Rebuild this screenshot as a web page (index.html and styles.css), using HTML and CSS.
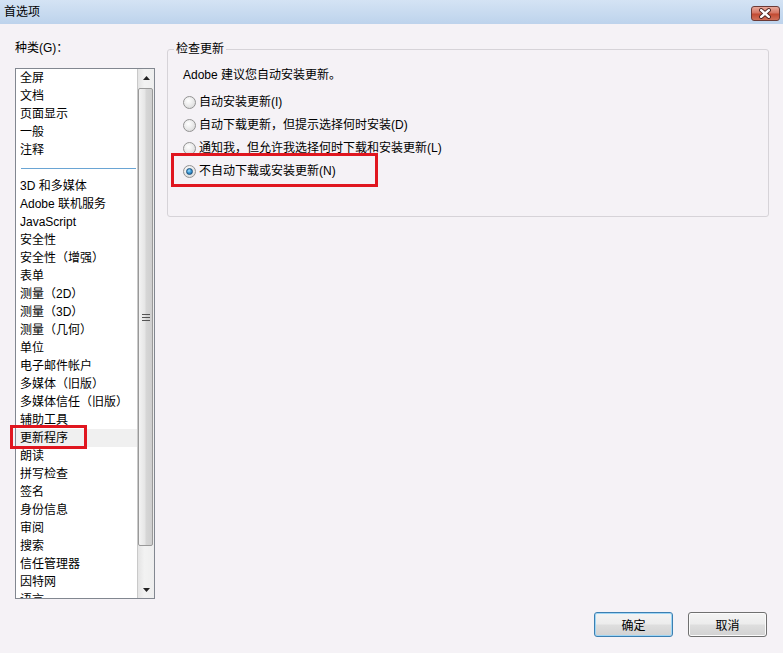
FILE: index.html
```html
<!DOCTYPE html>
<html lang="zh-CN">
<head>
<meta charset="utf-8">
<title>首选项</title>
<link rel="stylesheet" href="styles.css">
</head>
<body>
<div class="titlebar">
  <span class="title">首选项</span>
  <span class="close">
    <svg width="29" height="15" viewBox="0 0 29 15">
      <path d="M10.5 4 L18.5 11 M18.5 4 L10.5 11" stroke="#4a2320" stroke-width="4.2" stroke-linecap="round"/>
      <path d="M10.5 4 L18.5 11 M18.5 4 L10.5 11" stroke="#ffffff" stroke-width="2.4" stroke-linecap="round"/>
    </svg>
  </span>
</div>
<div class="main">
  <div class="left">
    <div class="cat-label">种类(G)：</div>
    <div class="listbox">
      <div class="items">
        <div class="item">全屏</div>
        <div class="item">文档</div>
        <div class="item">页面显示</div>
        <div class="item">一般</div>
        <div class="item">注释</div>
        <div class="sep"></div>
        <div class="item">3D 和多媒体</div>
        <div class="item">Adobe 联机服务</div>
        <div class="item">JavaScript</div>
        <div class="item">安全性</div>
        <div class="item">安全性（增强）</div>
        <div class="item">表单</div>
        <div class="item">测量（2D）</div>
        <div class="item">测量（3D）</div>
        <div class="item">测量（几何）</div>
        <div class="item">单位</div>
        <div class="item">电子邮件帐户</div>
        <div class="item">多媒体（旧版）</div>
        <div class="item">多媒体信任（旧版）</div>
        <div class="item">辅助工具</div>
        <div class="item selected">更新程序</div>
        <div class="item">朗读</div>
        <div class="item">拼写检查</div>
        <div class="item">签名</div>
        <div class="item">身份信息</div>
        <div class="item">审阅</div>
        <div class="item">搜索</div>
        <div class="item">信任管理器</div>
        <div class="item">因特网</div>
        <div class="item">语言</div>
      </div>
      <div class="scrollbar">
        <div class="sb-btn"><svg width="7" height="4" viewBox="0 0 7 4"><path d="M0 4 L3.5 0 L7 4 Z" fill="#222"/></svg></div>
        <div class="thumb">
          <svg width="8" height="7" viewBox="0 0 8 7"><path d="M0 0.5 H8 M0 3.5 H8 M0 6.5 H8" stroke="#555" stroke-width="1"/></svg>
        </div>
        <div class="track"></div>
        <div class="sb-btn"><svg width="7" height="4" viewBox="0 0 7 4"><path d="M0 0 L7 0 L3.5 4 Z" fill="#222"/></svg></div>
      </div>
    </div>
    <div class="mark mark-left"></div>
  </div>
  <div class="right">
    <fieldset class="group">
      <legend>检查更新</legend>
      <div class="gb-body">
        <div class="hint">Adobe 建议您自动安装更新。</div>
        <div class="radios">
          <div class="row"><span class="radio"></span>自动安装更新(I)</div>
          <div class="row"><span class="radio"></span>自动下载更新，但提示选择何时安装(D)</div>
          <div class="row"><span class="radio"></span>通知我，但允许我选择何时下载和安装更新(L)</div>
          <div class="row"><span class="radio checked"></span>不自动下载或安装更新(N)</div>
        </div>
      </div>
    </fieldset>
    <div class="mark mark-right"></div>
  </div>
</div>
<div class="footer">
  <button class="btn default">确定</button>
  <button class="btn">取消</button>
</div>
</body>
</html>
```
FILE: styles.css
```css
html, body {
  margin: 0;
  padding: 0;
}
body {
  width: 783px;
  height: 653px;
  overflow: hidden;
  background: #f5f2f6;
  color: #000;
  font-family: "Liberation Sans", "Noto Sans CJK SC", sans-serif;
  font-size: 12px;
  line-height: 18px;
  display: flex;
  flex-direction: column;
}
.titlebar {
  height: 24px;
  flex: none;
  background: linear-gradient(#d4e3f4, #bdd3ec);
  display: flex;
  justify-content: space-between;
  align-items: center;
  padding: 0 3px 0 4px;
}
.title {
  line-height: 14px;
}
.close {
  align-self: flex-end;
  margin-bottom: 3px;
  width: 29px;
  height: 15px;
  box-sizing: border-box;
  border: 1px solid #6b3a36;
  border-radius: 3px;
  background: linear-gradient(#e9a99b 0%, #d47563 45%, #c24a32 55%, #d0705a 100%);
  display: flex;
  overflow: hidden;
}
.close svg {
  margin: -1px 0 0 -1px;
}
.main {
  flex: 1;
  display: flex;
  gap: 12px;
  padding: 0 14px 0 15px;
}
.left {
  width: 140px;
  flex: none;
  position: relative;
}
.cat-label {
  margin-top: 17px;
  line-height: 14px;
}
.listbox {
  margin-top: 13px;
  height: 531px;
  box-sizing: border-box;
  border: 1px solid #828790;
  background: #fff;
  display: flex;
  overflow: hidden;
}
.items {
  flex: 1;
  min-width: 0;
}
.item {
  height: 18px;
  line-height: 18px;
  padding-left: 4px;
  white-space: nowrap;
}
.item.selected {
  background: #f0f0f0;
}
.sep {
  height: 18px;
  display: flex;
  align-items: center;
  padding: 0 1px 0 5px;
}
.sep::before {
  content: "";
  flex: 1;
  height: 1px;
  background: #6aa5d4;
}
.scrollbar {
  width: 17px;
  flex: none;
  display: flex;
  flex-direction: column;
  box-sizing: border-box;
  border-left: 1px solid #c9c9c9;
  background: linear-gradient(90deg, #e4e4e4, #f2f2f2 40%, #eeeeee);
}
.sb-btn {
  height: 17px;
  flex: none;
  display: flex;
  align-items: center;
  justify-content: center;
}
.thumb {
  margin: 2px 1px 0 0;
  height: 458px;
  flex: none;
  box-sizing: border-box;
  border: 1px solid #999;
  border-radius: 2px;
  background: linear-gradient(90deg, #f3f3f3, #e6e6e6 45%, #d6d6d6 55%, #cfcfcf);
  display: flex;
  align-items: center;
  justify-content: center;
}
.track {
  flex: 1;
}
.mark {
  position: absolute;
  box-sizing: border-box;
  border: 3px solid #e0161f;
}
.mark-left {
  left: -5px;
  top: 401px;
  width: 77px;
  height: 24px;
}
.right {
  flex: 1;
  position: relative;
}
.group {
  margin: 18px 0 0 0;
  padding: 0 0 0 6px;
  border: 1px solid #d6d3d8;
  border-radius: 3px;
  height: 175px;
  box-sizing: border-box;
  min-width: 0;
}
.group legend {
  padding: 0 2px;
  line-height: 14px;
}
.gb-body {
  padding: 10px 0 0 9px;
}
.hint {
  line-height: 18px;
}
.radios {
  margin-top: 7px;
}
.row {
  height: 23px;
  line-height: 23px;
  display: flex;
  align-items: center;
  white-space: nowrap;
}
.radio {
  width: 13px;
  height: 13px;
  flex: none;
  margin-right: 3px;
  box-sizing: border-box;
  border-radius: 50%;
  border: 1px solid #939393;
  background: radial-gradient(circle at 40% 35%, #ffffff 0%, #ececec 45%, #d2d2d2 100%);
  display: flex;
  align-items: center;
  justify-content: center;
}
.radio.checked::after {
  content: "";
  width: 7px;
  height: 7px;
  box-sizing: border-box;
  border-radius: 50%;
  border: 1px solid #1c4f7c;
  background: radial-gradient(circle at 40% 35%, #a9e1ff 0%, #3c9ad6 45%, #15609a 100%);
}
.mark-right {
  left: 4px;
  top: 129px;
  width: 207px;
  height: 34px;
}
.footer {
  flex: none;
  display: flex;
  justify-content: flex-end;
  gap: 15px;
  padding: 0 16px 16px 0;
}
.btn {
  width: 79px;
  height: 25px;
  box-sizing: border-box;
  margin: 0;
  padding: 0;
  font-family: "Liberation Sans", "Noto Sans CJK SC", sans-serif;
  font-size: 12px;
  color: #000;
  border: 1px solid #707070;
  border-radius: 3px;
  background: linear-gradient(#f4f4f4 0%, #ececec 48%, #dedede 52%, #d2d2d2 100%);
  box-shadow: inset 0 0 0 1px #fbfbfb;
}
.btn.default {
  border-color: #3c7fb1;
  box-shadow: inset 0 0 0 1px #9fd6f5;
}
```
